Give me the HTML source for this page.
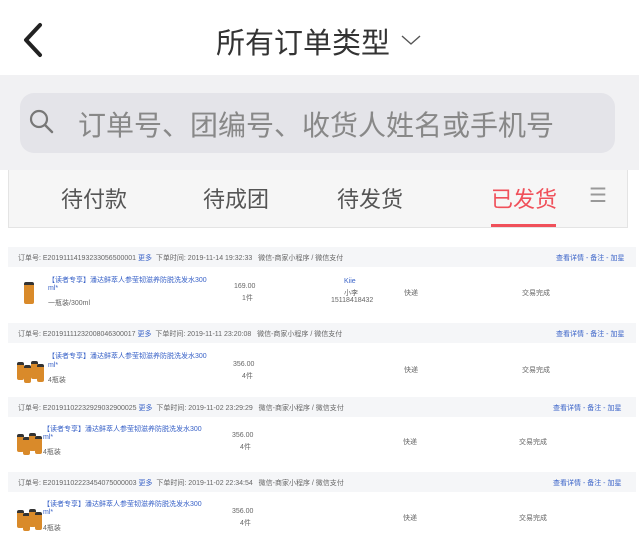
<!DOCTYPE html><html><head><meta charset="utf-8"><style>
*{margin:0;padding:0;box-sizing:border-box}
body{width:639px;height:538px;overflow:hidden;background:#fff;font-family:"Liberation Sans","Noto Sans CJK SC",sans-serif;position:relative;color:#555}
.a{position:absolute;white-space:nowrap}
.s{font-size:7px;color:#666}
.b{color:#3a63c8}
.hd{position:absolute;left:8px;width:628px;height:20px;background:#f5f6f8}
.bot{position:absolute;width:7px;height:18px;background:#d98a2a;border-radius:2px;border-top:3px solid #333}
</style></head><body>
<svg class="a" style="left:20px;top:22px" width="26" height="36"><path d="M20 3 L6 18 L20 33" stroke="#222" stroke-width="4" fill="none" stroke-linecap="round" stroke-linejoin="round"/></svg>
<div class="a" style="left:216px;top:20px;font-size:29px;color:#333">所有订单类型</div>
<svg class="a" style="left:400px;top:33px" width="24" height="14"><path d="M2 3 L11 11 L20 3" stroke="#555" stroke-width="1.4" fill="none"/></svg>
<div class="a" style="left:0;top:75px;width:639px;height:95px;background:#f1f1f3"></div>
<div class="a" style="left:20px;top:93px;width:595px;height:60px;background:#e4e4e9;border-radius:14px"></div>
<svg class="a" style="left:28px;top:108px" width="28" height="28"><circle cx="11" cy="11" r="8" stroke="#777" stroke-width="2.2" fill="none"/><path d="M17 17 L24 24" stroke="#777" stroke-width="2.4" stroke-linecap="round"/></svg>
<div class="a" style="left:78px;top:104px;font-size:28px;color:#888">订单号、团编号、收货人姓名或手机号</div>
<div class="a" style="left:8px;top:170px;width:620px;height:58px;background:#f6f6f6;border:1px solid #e4e4e4;border-top:none"></div>
<div class="a" style="left:61px;top:182px;font-size:22px;color:#555">待付款</div>
<div class="a" style="left:203px;top:182px;font-size:22px;color:#555">待成团</div>
<div class="a" style="left:337px;top:182px;font-size:22px;color:#555">待发货</div>
<div class="a" style="left:491px;top:182px;font-size:22px;color:#f0505a">已发货</div>
<div class="a" style="left:589px;top:183px;font-size:20px;color:#999">☰</div>
<div class="a" style="left:491px;top:224px;width:65px;height:3px;background:#f0505a"></div>

<div class="hd" style="top:247px"></div>
<div class="a s" style="left:18px;top:253px">订单号: E20191114193233056500001 <span class="b">更多</span>&nbsp; 下单时间: 2019-11-14 19:32:33 &nbsp; 微信-商家小程序 / 微信支付</div>
<div class="a s b" style="left:556px;top:253px">查看详情 - 备注 - 加星</div>
<div class="a s b" style="left:48px;top:275px">【读者专享】潘达鲜萃人参莹韧滋养防脱洗发水300</div>
<div class="a s b" style="left:48px;top:285px">ml*</div>
<div class="a s" style="left:48px;top:298px">一瓶装/300ml</div>
<div class="bot" style="left:24px;top:282px;width:10px;height:22px"></div>
<div class="a s" style="left:234px;top:283px">169.00</div><div class="a s" style="left:242px;top:293px">1件</div>
<div class="a s b" style="left:344px;top:278px">Kiie</div><div class="a s" style="left:344px;top:288px">小李</div><div class="a s" style="left:331px;top:297px">15118418432</div>
<div class="a s" style="left:404px;top:288px">快递</div><div class="a s" style="left:522px;top:288px">交易完成</div>

<div class="hd" style="top:323px"></div>
<div class="a s" style="left:18px;top:329px">订单号: E20191111232008046300017 <span class="b">更多</span>&nbsp; 下单时间: 2019-11-11 23:20:08 &nbsp; 微信-商家小程序 / 微信支付</div>
<div class="a s b" style="left:556px;top:329px">查看详情 - 备注 - 加星</div>
<div class="a s b" style="left:48px;top:351px">【读者专享】潘达鲜萃人参莹韧滋养防脱洗发水300</div>
<div class="a s b" style="left:48px;top:362px">ml*</div>
<div class="a s" style="left:48px;top:375px">4瓶装</div>
<div class="bot" style="left:17px;top:362px"></div><div class="bot" style="left:24px;top:365px"></div><div class="bot" style="left:31px;top:361px"></div><div class="bot" style="left:37px;top:364px"></div>
<div class="a s" style="left:233px;top:361px">356.00</div><div class="a s" style="left:242px;top:371px">4件</div>
<div class="a s" style="left:404px;top:365px">快递</div><div class="a s" style="left:522px;top:365px">交易完成</div>

<div class="hd" style="top:397px"></div>
<div class="a s" style="left:18px;top:403px">订单号: E20191102232929032900025 <span class="b">更多</span>&nbsp; 下单时间: 2019-11-02 23:29:29 &nbsp; 微信-商家小程序 / 微信支付</div>
<div class="a s b" style="left:553px;top:403px">查看详情 - 备注 - 加星</div>
<div class="a s b" style="left:43px;top:424px">【读者专享】潘达鲜萃人参莹韧滋养防脱洗发水300</div>
<div class="a s b" style="left:43px;top:434px">ml*</div>
<div class="a s" style="left:43px;top:447px">4瓶装</div>
<div class="bot" style="left:17px;top:434px"></div><div class="bot" style="left:23px;top:437px"></div><div class="bot" style="left:29px;top:433px"></div><div class="bot" style="left:35px;top:436px"></div>
<div class="a s" style="left:232px;top:432px">356.00</div><div class="a s" style="left:240px;top:442px">4件</div>
<div class="a s" style="left:403px;top:437px">快递</div><div class="a s" style="left:519px;top:437px">交易完成</div>

<div class="hd" style="top:472px"></div>
<div class="a s" style="left:18px;top:478px">订单号: E20191102223454075000003 <span class="b">更多</span>&nbsp; 下单时间: 2019-11-02 22:34:54 &nbsp; 微信-商家小程序 / 微信支付</div>
<div class="a s b" style="left:553px;top:478px">查看详情 - 备注 - 加星</div>
<div class="a s b" style="left:43px;top:499px">【读者专享】潘达鲜萃人参莹韧滋养防脱洗发水300</div>
<div class="a s b" style="left:43px;top:509px">ml*</div>
<div class="a s" style="left:43px;top:523px">4瓶装</div>
<div class="bot" style="left:17px;top:510px"></div><div class="bot" style="left:23px;top:513px"></div><div class="bot" style="left:29px;top:509px"></div><div class="bot" style="left:35px;top:512px"></div>
<div class="a s" style="left:232px;top:508px">356.00</div><div class="a s" style="left:240px;top:518px">4件</div>
<div class="a s" style="left:403px;top:513px">快递</div><div class="a s" style="left:519px;top:513px">交易完成</div>
</body></html>
